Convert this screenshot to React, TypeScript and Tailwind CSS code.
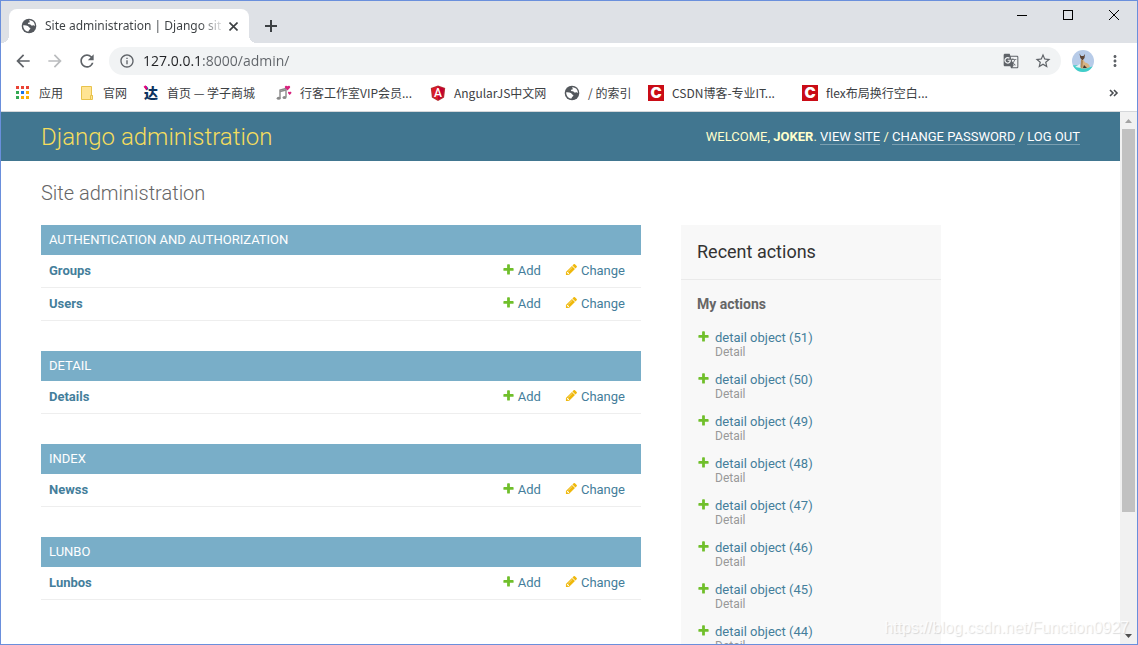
import { ReactNode } from "react";
import clsx from "clsx";
import {
  MdArrowBack,
  MdArrowForward,
  MdGTranslate,
  MdInfoOutline,
  MdMoreVert,
  MdRefresh,
  MdStarBorder,
} from "react-icons/md";

interface Bookmark {
  label: string;
  icon: ReactNode;
  width: string;
}

interface AppModule {
  name: string;
  models: string[];
}

const MODULES: AppModule[] = [
  { name: "Authentication and Authorization", models: ["Groups", "Users"] },
  { name: "Detail", models: ["Details"] },
  { name: "Index", models: ["Newss"] },
  { name: "Lunbo", models: ["Lunbos"] },
];

const RECENT = [51, 50, 49, 48, 47, 46, 45, 44];

function GlobeIcon() {
  return (
    <svg width="16" height="16" viewBox="0 0 16 16" className="shrink-0" aria-hidden="true">
      <circle cx="8" cy="8" r="7.3" fill="#54585d" />
      <path
        d="M8.2 2.2c1.700-.2 3.700.8 4.700 2.200.8 1.200 1.100 2.600.9 3.900-.5-.9-1.200-1.100-2-.9-.8.300-1.600.2-1.900-.5-.3-.8-1.200-.8-1.900-.6-.8.1-1.300-.5-1-1.200.3-.6 1.300-.4 1.700-.9.4-.6-.7-1.200-.5-2z"
        fill="#fff"
      />
      <path
        d="M2.200 7.300c1.600-.2 3.500 0 4.700.7.900.6 1 1.500 1.900 1.800.8.3.7 1.300 0 1.600-.8.300-.9.900-1.100 1.500-.1.400-.5.800-1.100.7-2.400-.6-4.500-3-4.400-6.300z"
        fill="#fff"
      />
    </svg>
  );
}

function AppsIcon() {
  const colors = ["#ea4335", "#ea4335", "#ea4335", "#34a853", "#1a73e8", "#fbae05", "#34a853", "#fbae05", "#fbae05"];
  return (
    <svg width="16" height="16" viewBox="0 0 16 16" className="shrink-0" aria-hidden="true">
      {colors.map((c, i) => (
        <rect key={i} x={1 + (i % 3) * 5} y={1 + Math.floor(i / 3) * 5} width="3" height="3" fill={c} />
      ))}
    </svg>
  );
}

function FolderIcon() {
  return (
    <svg width="16" height="16" viewBox="0 0 16 16" className="shrink-0" aria-hidden="true">
      <path d="M2.500 1.500h10v9h1v4h-11z" fill="#ffe493" stroke="#e8c34c" />
      <path d="M11.500 14.500v-4h2" fill="none" stroke="#e8c34c" />
    </svg>
  );
}

function DaIcon() {
  return (
    <svg width="16" height="16" viewBox="0 0 16 16" className="shrink-0 overflow-visible" aria-hidden="true">
      <text x="1" y="13" fontSize="14" fontWeight="900" fill="#0c3360" fontFamily="Noto Sans CJK SC, sans-serif">
        达
      </text>
      <path d="M1.500 1l2.500 3" stroke="#e6007e" strokeWidth="2.400" />
    </svg>
  );
}

function MusicIcon() {
  return (
    <svg width="16" height="16" viewBox="0 0 16 16" className="shrink-0" aria-hidden="true">
      <path d="M4 13V5l6-1.500V12" fill="none" stroke="#8a8a8a" strokeWidth="1.400" />
      <path d="M4 6.500l6-1.500" stroke="#8a8a8a" strokeWidth="1.500" />
      <ellipse cx="2.700" cy="13.300" rx="2" ry="1.500" fill="#8a8a8a" />
      <ellipse cx="8.500" cy="12.600" rx="2" ry="1.500" fill="#8a8a8a" />
      <path d="M11.500 5.500L9 2.700C8.200 1.300 10.200-.1 11.500 1.300c1.300-1.400 3.300 0 2.500 1.400z" fill="#d8237f" />
      <path d="M13.700 10l-1.600-1.800c-.6-1 .8-1.900 1.600-1 .8-.9 2.200 0 1.600 1z" fill="#d8237f" />
    </svg>
  );
}

function AngularIcon() {
  return (
    <svg width="16" height="16" viewBox="0 0 16 16" className="shrink-0" aria-hidden="true">
      <path d="M8 .5l7.200 2.500-1.100 9.500L8 16l-6.100-3.500L.8 3z" fill="#b52e31" />
      <path d="M8 1.500l6 2.100-1 8.200L8 14.700z" fill="#c3002f" />
      <path d="M8 1.500L2 3.600l1 8.200 5 2.900z" fill="#dd1b26" />
      <text x="8" y="12" fontSize="12" fontWeight="500" textAnchor="middle" fill="#fff" fontFamily="Roboto, sans-serif">
        A
      </text>
    </svg>
  );
}

function CsdnIcon() {
  return (
    <svg width="16" height="16" viewBox="0 0 16 16" className="shrink-0" aria-hidden="true">
      <rect width="16" height="16" fill="#ca0c16" />
      <text
        x="8"
        y="13"
        fontSize="15"
        fontWeight="900"
        textAnchor="middle"
        fill="#fff"
        fontFamily="Inter, sans-serif"
      >
        C
      </text>
    </svg>
  );
}

function AvatarIcon() {
  return (
    <svg width="22" height="22" viewBox="0 0 22 22" aria-hidden="true">
      <defs>
        <clipPath id="avatar">
          <circle cx="11" cy="11" r="11" />
        </clipPath>
      </defs>
      <g clipPath="url(#avatar)">
        <rect width="22" height="22" fill="#b7cbe8" />
        <path d="M0 15.500q6-1 11 1t11-.5V22H0z" fill="#3fcfc9" />
        <path d="M3 17l5-3 1 4z" fill="#e8f0f4" />
        <path d="M9 9.500q2-1 4 3 4 .5 5 4.500l-4 1.500H9z" fill="#d8b483" />
        <path d="M7.500 3.500l1.500 2.500h2.500L13 4l-.5 4-2 2.500-2.200-2.500z" fill="#5b4436" />
        <path d="M9 9.500l-.5 8 1.800.5.700-7z" fill="#b08a5c" />
        <path d="M12 15l3 3h-4z" fill="#42332e" />
      </g>
    </svg>
  );
}

function PlusIcon() {
  return (
    <svg width="13" height="13" viewBox="0 0 1792 1792" fill="#70bf2b" className="shrink-0" aria-hidden="true">
      <path d="M1600 796v192q0 40-28 68t-68 28h-416v416q0 40-28 68t-68 28H800q-40 0-68-28t-28-68v-416H288q-40 0-68-28t-28-68V796q0-40 28-68t68-28h416V284q0-40 28-68t68-28h192q40 0 68 28t28 68v416h416q40 0 68 28t28 68z" />
    </svg>
  );
}

function PencilIcon() {
  return (
    <svg width="13" height="13" viewBox="0 0 1792 1792" fill="#efb80b" className="shrink-0" aria-hidden="true">
      <path d="M491 1536l91-91-235-235-91 91v107h128v128h107zm523-928q0-22-22-22-10 0-17 7l-542 542q-7 7-7 17 0 22 22 22 10 0 17-7l542-542q7-7 7-17zm-54-192l416 416-832 832H128v-416zm683 96q0 53-37 90l-166 166-416-416 166-165q36-38 90-38 53 0 91 38l235 234q37 39 37 91z" />
    </svg>
  );
}

const BOOKMARKS: Bookmark[] = [
  { label: "应用", icon: <AppsIcon />, width: "w-12" },
  { label: "官网", icon: <FolderIcon />, width: "w-12" },
  { label: "首页 — 学子商城", icon: <DaIcon />, width: "w-[117px]" },
  { label: "行客工作室VIP会员...", icon: <MusicIcon />, width: "w-[138px]" },
  { label: "AngularJS中文网", icon: <AngularIcon />, width: "w-[118px]" },
  { label: "/ 的索引", icon: <GlobeIcon />, width: "w-[68px]" },
  { label: "CSDN博客-专业IT...", icon: <CsdnIcon />, width: "w-[138px]" },
  { label: "flex布局换行空白...", icon: <CsdnIcon />, width: "w-[138px]" },
];

function TabStrip() {
  return (
    <div className="flex h-[42px] shrink-0 bg-[#dee1e6]">
      <div className="relative ml-2 mt-2 flex w-60 items-center rounded-t-lg bg-white pl-3">
        <span className="absolute bottom-0 -left-2 size-2 bg-[radial-gradient(circle_at_0_0,transparent_8px,#fff_8px)]" />
        <span className="absolute bottom-0 -right-2 size-2 bg-[radial-gradient(circle_at_100%_0,transparent_8px,#fff_8px)]" />
        <GlobeIcon />
        <span className="ml-2 w-44 whitespace-nowrap bg-[linear-gradient(to_right,#3c4043_155px,transparent_180px)] bg-clip-text font-['Noto_Sans',sans-serif] text-[12px] leading-5 text-transparent">
          Site administration | Django sit
        </span>
        <button aria-label="Close tab" className="ml-1 flex size-4 items-center justify-center">
          <svg width="9" height="9" viewBox="0 0 9 9" stroke="#3c4043" strokeWidth="1.600">
            <path d="M.5.500l8 8M8.500.500l-8 8" />
          </svg>
        </button>
      </div>
      <button aria-label="New tab" className="ml-2 mt-2 flex h-[34px] w-7 items-center justify-center">
        <svg width="12" height="12" viewBox="0 0 12 12" stroke="#3c4043" strokeWidth="2">
          <path d="M6 0v12M0 6h12" />
        </svg>
      </button>
      <div className="ml-auto flex h-7">
        <button aria-label="Minimize" className="flex w-[46px] items-center justify-center">
          <svg width="10" height="10" viewBox="0 0 10 10" fill="#000">
            <rect y="5" width="10" height="1" />
          </svg>
        </button>
        <button aria-label="Maximize" className="flex w-[46px] items-center justify-center">
          <svg width="10" height="10" viewBox="0 0 10 10" fill="none" stroke="#000">
            <rect x=".5" y=".5" width="9" height="9" />
          </svg>
        </button>
        <button aria-label="Close" className="flex w-[46px] items-center justify-center">
          <svg width="10" height="10" viewBox="0 0 10 10" stroke="#000">
            <path d="M0 0l10 10M10 0L0 10" />
          </svg>
        </button>
      </div>
    </div>
  );
}

function Toolbar() {
  const btn = "flex w-8 h-7 shrink-0 items-center justify-center";
  return (
    <div className="flex h-9 shrink-0 items-center px-1.5 text-[#5f6368]">
      <button aria-label="Back" className={btn}>
        <MdArrowBack size={20} />
      </button>
      <button aria-label="Forward" className={clsx(btn, "text-[#babcbe]")}>
        <MdArrowForward size={20} />
      </button>
      <button aria-label="Reload" className={btn}>
        <MdRefresh size={20} />
      </button>
      <div className="mx-1.5 flex h-7 min-w-0 flex-1 items-center rounded-full bg-[#f1f3f4] pl-2.5 pr-0.5">
        <MdInfoOutline size={16} className="shrink-0" />
        <input
          aria-label="Address"
          defaultValue="127.0.0.1:8000/admin/"
          className="ml-2 min-w-0 flex-1 bg-[linear-gradient(to_right,#202124_60px,#5f6368_60px)] bg-clip-text font-['Open_Sans',sans-serif] text-[14px] leading-5 text-transparent outline-none"
        />
        <button aria-label="Translate" className={btn}>
          <MdGTranslate size={16} />
        </button>
        <button aria-label="Bookmark this page" className={btn}>
          <MdStarBorder size={18} />
        </button>
      </div>
      <button aria-label="Profile" className={btn}>
        <AvatarIcon />
      </button>
      <button aria-label="Menu" className={btn}>
        <MdMoreVert size={18} />
      </button>
    </div>
  );
}

function BookmarksBar() {
  return (
    <nav className="flex h-[33px] shrink-0 items-center border-b border-[#d5d7da] pb-1 pl-3.5 pr-[18px]">
      {BOOKMARKS.map((b) => (
        <a
          key={b.label}
          href="#"
          className={clsx("mr-4 flex shrink-0 items-center gap-2 whitespace-nowrap text-[12px] leading-5 text-[#3c4043]", b.width)}
        >
          {b.icon}
          <span>{b.label}</span>
        </a>
      ))}
      <button aria-label="More bookmarks" className="ml-auto">
        <svg width="10" height="8" viewBox="0 0 10 8" fill="none" stroke="#4a4d51" strokeWidth="1.600">
          <path d="M1 1l3 3-3 3M5 1l3 3-3 3" />
        </svg>
      </button>
    </nav>
  );
}

function ModuleTable({ name, models }: AppModule) {
  return (
    <table className="mb-[30px] w-full border-separate border-spacing-0 text-[13px] leading-4">
      <caption className="h-[30px] bg-[#79aec8] px-2 text-left text-[13px] uppercase leading-[30px] text-white">
        <a href="#">{name}</a>
      </caption>
      <tbody className="text-[#447e9b]">
        {models.map((m) => (
          <tr key={m}>
            <th scope="row" className="w-full border-b border-[#eee] p-2 text-left font-bold">
              <a href="#">{m}</a>
            </th>
            <td className="border-b border-[#eee] py-2 pl-2 pr-4">
              <a href="#" className="flex items-start gap-[3px]">
                <PlusIcon />
                Add
              </a>
            </td>
            <td className="border-b border-[#eee] py-2 pl-2 pr-4">
              <a href="#" className="flex items-start gap-[3px]">
                <PencilIcon />
                Change
              </a>
            </td>
          </tr>
        ))}
      </tbody>
    </table>
  );
}

function RecentActions() {
  return (
    <aside className="w-[260px] shrink-0 bg-[#f8f8f8]">
      <h2 className="border-b border-[#eaeaea] p-4 text-[18px] leading-[22px] text-[#333]">Recent actions</h2>
      <h3 className="mx-4 mb-[18px] mt-4 text-[14px] font-bold leading-4 text-[#666]">My actions</h3>
      <ul className="px-4">
        {RECENT.map((n) => (
          <li key={n} className="flex gap-[5px] pb-3">
            <PlusIcon />
            <div>
              <a href="#" className="block text-[13px] leading-[15px] text-[#447e9b]">
                detail object ({n})
              </a>
              <span className="block text-[12px] leading-[15px] text-[#999]">Detail</span>
            </div>
          </li>
        ))}
      </ul>
    </aside>
  );
}

function AdminHeader() {
  const link = "border-b border-[#7a9fb1] text-white";
  return (
    <header className="flex h-[49px] items-center justify-between bg-[#417690] px-10 text-[#ffc]">
      <h1 className="text-[24px] font-light leading-7 text-[#f5dd5d]">
        <a href="#">Django administration</a>
      </h1>
      <div className="text-[13px] uppercase leading-4">
        Welcome, <strong className="font-bold">Joker</strong>.{" "}
        <a href="#" className={link}>View site</a> / <a href="#" className={link}>Change password</a> /{" "}
        <a href="#" className={link}>Log out</a>
      </div>
    </header>
  );
}

function Scrollbar() {
  return (
    <div className="flex w-[17px] shrink-0 flex-col bg-[#f1f1f1]">
      <button aria-label="Scroll up" className="flex h-[17px] items-center justify-center">
        <svg width="7" height="4" viewBox="0 0 7 4" fill="#a3a3a3">
          <path d="M0 4L3.500 0 7 4z" />
        </svg>
      </button>
      <div className="flex-1">
        <div className="mx-0.5 h-[77%] bg-[#c1c1c1]" />
      </div>
      <button aria-label="Scroll down" className="flex h-[17px] items-center justify-center">
        <svg width="7" height="4" viewBox="0 0 7 4" fill="#505050">
          <path d="M0 0l3.500 4L7 0z" />
        </svg>
      </button>
    </div>
  );
}

export default function App() {
  return (
    <div className="relative flex h-screen flex-col overflow-hidden border border-[#6a8fdc] bg-white font-['Noto_Sans_CJK_SC',sans-serif]">
      <TabStrip />
      <Toolbar />
      <BookmarksBar />
      <div className="flex min-h-0 flex-1">
        <div className="min-w-0 flex-1 overflow-hidden font-['Roboto','Liberation_Sans',sans-serif]">
          <AdminHeader />
          <main className="px-10 py-5">
            <h1 className="mb-5 text-[20px] font-light leading-6 text-[#666]">Site administration</h1>
            <div className="flex items-start gap-10">
              <div className="w-[600px] shrink-0">
                {MODULES.map((m) => (
                  <ModuleTable key={m.name} {...m} />
                ))}
              </div>
              <RecentActions />
            </div>
          </main>
        </div>
        <Scrollbar />
      </div>
      <span className="pointer-events-none absolute bottom-1 right-2 font-['Liberation_Sans',sans-serif] text-[16px] leading-6 text-white/80 [text-shadow:1px_1px_1px_rgba(0,0,0,0.14)]">
        https://blog.csdn.net/Function0927
      </span>
    </div>
  );
}
